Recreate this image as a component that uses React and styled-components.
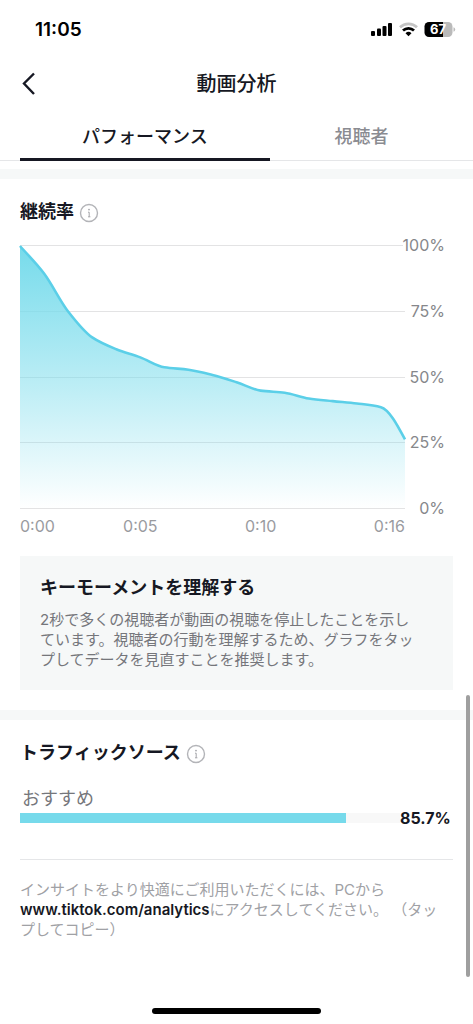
import React, { useState } from "react";
import styled, { createGlobalStyle } from "styled-components";

const retention = [
  100, 89.5, 75, 65.1, 60.6, 57.5, 53.7, 52.8, 50.8, 48, 44.8, 44, 41.8, 40.8,
  39.9, 38.5, 26.2,
];

const yLabels = ["100%", "75%", "50%", "25%", "0%"];
const xLabels = ["0:00", "0:05", "0:10", "0:16"];

const tabs = [
  { id: "performance", title: "パフォーマンス" },
  { id: "viewers", title: "視聴者" },
];

const sources = [{ title: "おすすめ", value: 85.7 }];

const WIDTH = 384;
const HEIGHT = 264;

// monotone cubic through the samples, so that the line never overshoots
function linePath(values) {
  const step = WIDTH / (values.length - 1);
  const ys = values.map((v) => 1 + ((100 - v) / 100) * (HEIGHT - 2));
  const d = ys.slice(1).map((y, i) => y - ys[i]);
  const m = ys.map((_, i) => {
    if (i === 0) return d[0];
    if (i === ys.length - 1) return null;
    const a = d[i - 1];
    const b = d[i];
    return a * b <= 0 ? 0 : (2 * a * b) / (a + b);
  });
  const last = ys.length - 1;
  m[last] = (3 * d[last - 1] - m[last - 1]) / 2;

  let path = `M0 ${ys[0]}`;
  for (let i = 0; i < last; i++) {
    const x = i * step;
    path += ` C${x + step / 3} ${ys[i] + m[i] / 3} ${x + (2 * step) / 3} ${
      ys[i + 1] - m[i + 1] / 3
    } ${x + step} ${ys[i + 1]}`;
  }
  return path;
}

function StatusIcons() {
  return (
    <svg width="86" height="20" viewBox="0 0 86 20" aria-hidden="true">
      <rect x="1" y="12" width="4" height="5" rx="1" />
      <rect x="7" y="9.5" width="4" height="7.5" rx="1" />
      <rect x="12.5" y="7" width="4" height="10" rx="1" />
      <rect x="18" y="4" width="4" height="13" rx="1" />
      <g fill="none" strokeWidth="2.8">
        <path d="M30 8.3a12.3 12.3 0 0 1 17 0" stroke="#c4c4c4" />
        <path d="M33 11.6a8 8 0 0 1 11 0" stroke="#000" />
      </g>
      <path d="M38.5 17.2l-3-3a4.4 4.4 0 0 1 6 0z" />
      <path d="M59 3h14v15H59a4.5 4.5 0 0 1-4.5-4.5v-6A4.5 4.5 0 0 1 59 3z" />
      <path
        d="M73 3h5a4.5 4.5 0 0 1 4.5 4.5v6A4.5 4.5 0 0 1 78 18h-5z"
        fill="#bababa"
      />
      <path d="M83.5 8.3q1.7 .5 1.7 2.200t-1.7 2.2z" fill="#bababa" />
      <BatteryText x="68" y="15" textAnchor="middle">
        67
      </BatteryText>
    </svg>
  );
}

function Info({ label }) {
  return (
    <InfoButton aria-label={label}>
      <svg width="20" height="20" viewBox="0 0 20 20" fill="none">
        <circle cx="10" cy="10" r="8.5" stroke="#b3b4b8" strokeWidth="1.4" />
        <circle cx="10" cy="6.6" r="0.9" fill="#a5a6aa" />
        <path
          d="M9 9.200h1.200v4.600M9 13.800h2.400"
          stroke="#a5a6aa"
          strokeWidth="1"
        />
      </svg>
    </InfoButton>
  );
}

function RetentionChart() {
  const line = linePath(retention);
  return (
    <Chart>
      <Plot
        viewBox={`0 0 ${WIDTH} ${HEIGHT}`}
        preserveAspectRatio="none"
        role="img"
        aria-label="継続率"
      >
        <defs>
          <linearGradient id="fade" x1="0" y1="0" x2="0" y2="1">
            <stop offset="0" stopColor="#76dbeb" />
            <stop offset="0.5" stopColor="#76dbeb" stopOpacity="0.52" />
            <stop offset="1" stopColor="#76dbeb" stopOpacity="0" />
          </linearGradient>
        </defs>
        {yLabels.map((label, i) => {
          const y = 0.5 + Math.round((i * (HEIGHT - 1)) / 4);
          return (
            <path
              key={label}
              d={`M0 ${y}H${WIDTH}`}
              stroke="#161823"
              strokeOpacity="0.12"
            />
          );
        })}
        <path
          d={`${line} L${WIDTH} ${HEIGHT} L0 ${HEIGHT} Z`}
          fill="url(#fade)"
        />
        <path
          d={line}
          fill="none"
          stroke="#5bcfe8"
          strokeWidth="2.6"
          vectorEffect="non-scaling-stroke"
        />
      </Plot>
      <YAxis>
        {yLabels.map((label) => (
          <YLabel key={label}>{label}</YLabel>
        ))}
      </YAxis>
      <XAxis>
        {xLabels.map((label) => (
          <span key={label}>{label}</span>
        ))}
      </XAxis>
    </Chart>
  );
}

function App() {
  const [active, setActive] = useState("performance");

  return (
    <Screen>
      <GlobalStyle />
      <StatusBar>
        <Time>11:05</Time>
        <StatusIcons />
      </StatusBar>
      <Header>
        <BackButton aria-label="戻る">
          <svg width="16" height="24" viewBox="0 0 16 24" fill="none">
            <path d="M14 1.500L4 11.500l10 10.500" stroke="#161823" strokeWidth="2.4" />
          </svg>
        </BackButton>
        <Title>動画分析</Title>
      </Header>
      <Tabs>
        {tabs.map((tab) => (
          <Tab
            key={tab.id}
            $active={tab.id === active}
            onClick={() => setActive(tab.id)}
          >
            {tab.title}
          </Tab>
        ))}
      </Tabs>
      <Band $first />
      <Section>
        <SectionTitle>
          継続率
          <Info label="継続率について" />
        </SectionTitle>
        <RetentionChart />
        <Notice>
          <NoticeTitle>キーモーメントを理解する</NoticeTitle>
          <NoticeText>
            2秒で多くの視聴者が動画の視聴を停止したことを示しています。視聴者の行動を理解するため、グラフをタップしてデータを見直すことを推奨します。
          </NoticeText>
        </Notice>
      </Section>
      <Band />
      <Section>
        <SectionTitle>
          トラフィックソース
          <Info label="トラフィックソースについて" />
        </SectionTitle>
        {sources.map((source) => (
          <Source key={source.title}>
            <SourceName>{source.title}</SourceName>
            <SourceRow>
              <Track>
                <Fill style={{ width: `${source.value}%` }} />
              </Track>
              <Percent>{source.value}%</Percent>
            </SourceRow>
          </Source>
        ))}
        <Footnote>
          インサイトをより快適にご利用いただくには、PCから
          <SiteLink href="#analytics">www.tiktok.com/analytics</SiteLink>
          にアクセスしてください。 （タップしてコピー）
        </Footnote>
      </Section>
      <ScrollThumb />
      <HomeBar />
    </Screen>
  );
}

const GlobalStyle = createGlobalStyle`
  * {
    box-sizing: border-box;
  }
  body {
    margin: 0;
    background-color: #fff;
    color: #161823;
    font-family: Inter, "Noto Sans CJK JP", sans-serif;
  }
  button {
    border: none;
    background: none;
    padding: 0;
    color: inherit;
    font-family: inherit;
    cursor: pointer;
  }
`;

const Screen = styled.div`
  position: relative;
  min-height: 100vh;
  display: flex;
  flex-direction: column;
`;

const StatusBar = styled.div`
  height: 58px;
  padding: 0 17px 0 35px;
  display: flex;
  align-items: center;
  justify-content: space-between;
`;

const Time = styled.span`
  color: #000;
  font-size: 19px;
  font-weight: 600;
`;

const BatteryText = styled.text`
  fill: #fff;
  font-size: 13px;
  font-weight: 700;
`;

const Header = styled.header`
  height: 52px;
  padding: 0 20px;
  display: grid;
  grid-template-columns: 24px 1fr 24px;
  align-items: center;
`;

const BackButton = styled.button`
  height: 24px;
  display: flex;
`;

const Title = styled.h1`
  margin: 0;
  font-size: 20px;
  line-height: 28px;
  font-weight: 500;
  text-align: center;
`;

const Tabs = styled.nav`
  height: 51px;
  padding: 0 20px;
  display: grid;
  grid-template-columns: 15fr 11fr;
  box-shadow: inset 0 -1px #e5e6e8;
`;

const Tab = styled.button`
  padding-top: 1px;
  border-bottom: 3px solid ${(props) => (props.$active ? "#161823" : "transparent")};
  color: ${(props) => (props.$active ? "#161823" : "#8a8b91")};
  font-size: 18px;
  font-weight: 500;
`;

const Band = styled.div`
  height: 10px;
  margin-top: ${(props) => (props.$first ? "8px" : "20px")};
  background-color: #f6f8f8;
`;

const Section = styled.section`
  padding: 21px 20px 0;
`;

const SectionTitle = styled.h2`
  margin: 0;
  display: flex;
  align-items: center;
  gap: 5px;
  font-size: 18px;
  line-height: 24px;
  font-weight: 700;
`;

const InfoButton = styled.button`
  display: flex;
  padding-top: 1px;
`;

const Chart = styled.div`
  margin-top: 21px;
  display: grid;
  grid-template-columns: 1fr 48px;
`;

const Plot = styled.svg`
  width: 100%;
  height: 264px;
  overflow: visible;
`;

const YAxis = styled.div`
  margin: -10px 0 -9px;
  padding-right: 8px;
  display: flex;
  flex-direction: column;
  align-items: flex-end;
  justify-content: space-between;
  color: #86878b;
  font-size: 16px;
  line-height: 20px;
`;

const YLabel = styled.span`
  background-color: #fff;
`;

const XAxis = styled.div`
  margin-top: 7px;
  display: grid;
  grid-template-columns: 5fr 10fr 10fr 7fr;
  color: #9a9b9f;
  font-size: 16px;
  line-height: 20px;
  text-align: center;

  span:first-child {
    text-align: left;
  }
  span:last-child {
    text-align: right;
  }
`;

const Notice = styled.div`
  margin-top: 20px;
  padding: 20px 32px 20px 20px;
  background-color: #f6f8f8;
`;

const NoticeTitle = styled.h3`
  margin: 0;
  font-size: 18px;
  line-height: 24px;
  font-weight: 700;
`;

const NoticeText = styled.p`
  margin: 10px 0 0;
  color: #75767b;
  font-size: 15px;
  line-height: 20px;
`;

const Source = styled.div`
  margin-top: 24px;
  padding-bottom: 32px;
  border-bottom: 1px solid #e5e6e8;
`;

const SourceName = styled.div`
  padding-left: 2px;
  color: #75767b;
  font-size: 18px;
  line-height: 20px;
`;

const SourceRow = styled.div`
  display: flex;
  align-items: center;
  height: 18px;
`;

const Track = styled.div`
  flex: 1;
  height: 10px;
  background-color: #f8f8f8;
`;

const Fill = styled.div`
  height: 10px;
  background-color: #77daeb;
`;

const Percent = styled.span`
  width: 53px;
  padding-right: 3px;
  font-size: 16px;
  line-height: 18px;
  font-weight: 700;
  text-align: right;
`;

const Footnote = styled.p`
  margin: 20px 0 0;
  padding-right: 8px;
  color: #a0a1a5;
  font-size: 15px;
  line-height: 20px;
`;

const SiteLink = styled.a`
  color: #161823;
  font-weight: 600;
  text-decoration: none;
`;

const ScrollThumb = styled.div`
  position: absolute;
  top: 695px;
  right: 3px;
  width: 4px;
  height: 282px;
  border-radius: 2px;
  background-color: #9f9f9f;
`;

const HomeBar = styled.div`
  width: 169px;
  height: 6px;
  margin: auto auto 10px;
  border-radius: 3px;
  background-color: #000;
`;

export default App;
